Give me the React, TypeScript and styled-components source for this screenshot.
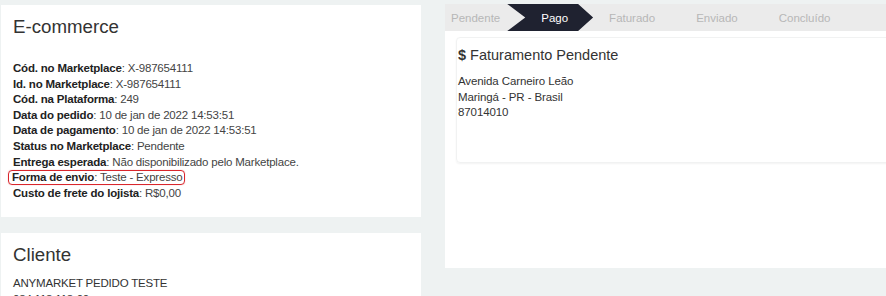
import styled, { createGlobalStyle } from "styled-components";

const GlobalStyle = createGlobalStyle`
    html, body {
        margin: 0;
        padding: 0;
        background: #eef2f2;
        overflow: hidden;
    }
    body {
        font-family: "Liberation Sans", Arial, sans-serif;
        color: #333;
    }
`;

interface FieldItem {
    label: string;
    value: string;
    highlight?: boolean;
}

const fields: FieldItem[] = [
    { label: "Cód. no Marketplace", value: "X-987654111" },
    { label: "Id. no Marketplace", value: "X-987654111" },
    { label: "Cód. na Plataforma", value: "249" },
    { label: "Data do pedido", value: "10 de jan de 2022 14:53:51" },
    { label: "Data de pagamento", value: "10 de jan de 2022 14:53:51" },
    { label: "Status no Marketplace", value: "Pendente" },
    { label: "Entrega esperada", value: "Não disponibilizado pelo Marketplace." },
    { label: "Forma de envio", value: "Teste - Expresso", highlight: true },
    { label: "Custo de frete do lojista", value: "R$0,00" },
];

const steps = ["Pendente", "Pago", "Faturado", "Enviado", "Concluído"];
const activeStep = 1;

const App = () => {
    return (
        <>
            <GlobalStyle />
            <StyledPage>
                <StyledLeftColumn>
                    <StyledCard>
                        <StyledCardTitle>E-commerce</StyledCardTitle>
                        <StyledFieldList>
                            {fields.map((f) => {
                                const content = (
                                    <>
                                        <StyledLabel>{f.label}</StyledLabel>: {f.value}
                                    </>
                                );
                                return (
                                    <StyledField key={f.label}>
                                        {f.highlight ? <StyledHighlight>{content}</StyledHighlight> : content}
                                    </StyledField>
                                );
                            })}
                        </StyledFieldList>
                    </StyledCard>
                    <StyledCard>
                        <StyledCardTitle>Cliente</StyledCardTitle>
                        <StyledClientList>
                            <StyledField>ANYMARKET PEDIDO TESTE</StyledField>
                            <StyledField>034.113.113-00</StyledField>
                        </StyledClientList>
                    </StyledCard>
                </StyledLeftColumn>

                <StyledRightColumn>
                    <StyledStepper>
                        {steps.map((s, i) => (
                            <StyledStep key={s} $active={i === activeStep} $first={i === 0}>
                                {s}
                            </StyledStep>
                        ))}
                    </StyledStepper>
                    <StyledPanel>
                        <StyledAddressBox>
                            <StyledBoxTitle>
                                <StyledDollar>$</StyledDollar>Faturamento Pendente
                            </StyledBoxTitle>
                            <StyledAddress>
                                <div>Avenida Carneiro Leão</div>
                                <div>Maringá - PR - Brasil</div>
                                <div>87014010</div>
                            </StyledAddress>
                        </StyledAddressBox>
                    </StyledPanel>
                </StyledRightColumn>
            </StyledPage>
        </>
    );
};

const StyledPage = styled.div`
    display: grid;
    grid-template-columns: 420px 470px;
    column-gap: 24px;
    padding: 4px 0 0 1px;
    align-items: start;
`;

const StyledLeftColumn = styled.div`
    display: flex;
    flex-direction: column;
    gap: 16px;
    margin-top: 1px;
`;

const StyledCard = styled.div`
    background: #ffffff;
    padding: 11px 12px 16px;
`;

const StyledCardTitle = styled.h2`
    margin: 0;
    font-size: 18.7px;
    line-height: 22px;
    font-weight: normal;
    color: #333;
`;

const StyledFieldList = styled.div`
    margin-top: 23px;
    font-size: 11.5px;
    letter-spacing: -0.2px;
    line-height: 15.6px;
    color: #444;
`;

const StyledClientList = styled(StyledFieldList)`
    margin-top: 10px;
    color: #333;
`;

const StyledField = styled.div`
    white-space: nowrap;
`;

const StyledLabel = styled.b`
    color: #222;
`;

const StyledHighlight = styled.span`
    display: inline-block;
    margin-left: -5px;
    padding: 0 2px 0 3px;
    line-height: 13px;
    border: 1.5px solid #d9262c;
    border-radius: 4px;
    box-shadow: 0 0 1px rgba(217, 38, 44, 0.5);
`;

const StyledRightColumn = styled.div`
    display: flex;
    flex-direction: column;
`;

const StyledStepper = styled.div`
    display: flex;
    height: 27px;
    background: #ebebeb;
`;

const StyledStep = styled.div<{ $active?: boolean; $first?: boolean }>`
    display: flex;
    align-items: center;
    height: 100%;
    padding: 0 25px 0 ${(p) => (p.$first ? "6px" : "34px")};
    margin-right: -18px;
    font-size: 11.5px;
    color: ${(p) => (p.$active ? "#ffffff" : "#b7b7b7")};
    background: ${(p) => (p.$active ? "#1f2230" : "transparent")};
    clip-path: ${(p) =>
        p.$active
            ? "polygon(0 0, calc(100% - 15px) 0, 100% 50%, calc(100% - 15px) 100%, 0 100%, 18px 50%)"
            : "none"};
`;

const StyledPanel = styled.div`
    background: #ffffff;
    height: 237px;
    padding: 6px 0 0 11px;
    box-sizing: border-box;
`;

const StyledAddressBox = styled.div`
    height: 126px;
    box-sizing: border-box;
    padding: 9px 12px 0 1px;
    border: 1px solid #f1f2f2;
    border-radius: 4px;
    box-shadow: 0 1px 2px rgba(0, 0, 0, 0.05);
`;

const StyledBoxTitle = styled.div`
    font-size: 14.5px;
    line-height: 17px;
    color: #333;
`;

const StyledDollar = styled.span`
    font-weight: bold;
    margin-right: 4px;
`;

const StyledAddress = styled.div`
    margin-top: 10px;
    font-size: 11.5px;
    letter-spacing: -0.1px;
    line-height: 15.6px;
    color: #333;
`;

export default App;
